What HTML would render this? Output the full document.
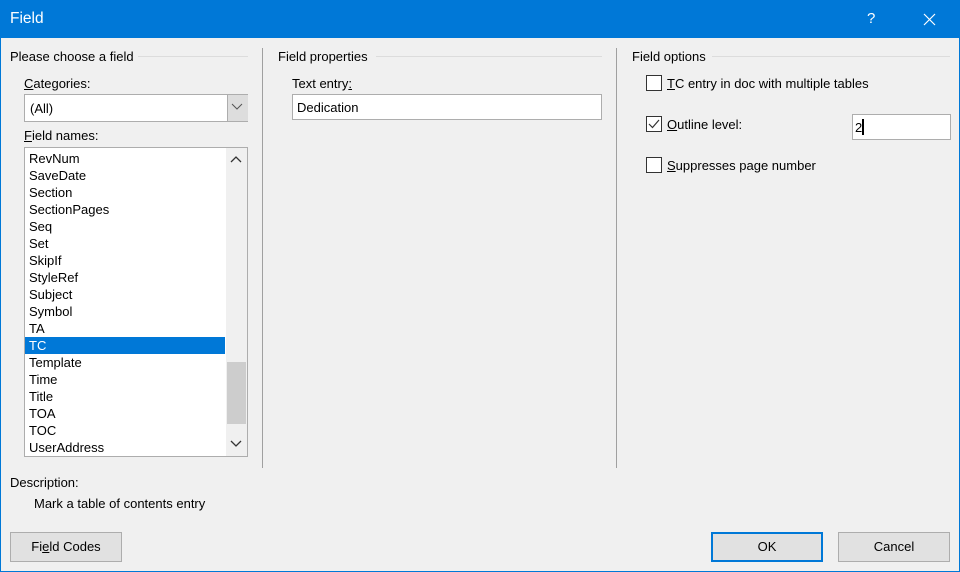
<!DOCTYPE html><html><head><style>
*{margin:0;padding:0;box-sizing:border-box}
body{width:960px;height:572px;background:#f0f0f0;font-family:"Liberation Sans",sans-serif;font-size:13px;color:#000;position:relative;overflow:hidden}
.a{position:absolute;white-space:nowrap}
.tb{position:absolute;left:0;top:0;width:960px;height:38px;background:#0078d7;color:#fff}
.line{position:absolute;height:1px;background:#dcdcdc}
.vs{position:absolute;width:1px;background:#a0a0a0;top:48px;height:420px}
.box{position:absolute;background:#fff;border:1px solid #adadad}
.cb{position:absolute;width:16px;height:16px;border:1px solid #333;background:#fff}
.btn{position:absolute;height:30px;background:#e1e1e1;border:1px solid #adadad;text-align:center;line-height:28px}
u{text-decoration:underline}
.it{position:absolute;left:4px;height:17px;line-height:17px}
</style></head><body>
<div class="a" style="left:0;top:0;width:1px;height:572px;background:#0078d7"></div>
<div class="a" style="left:959px;top:0;width:1px;height:572px;background:#0078d7"></div>
<div class="a" style="left:0;top:571px;width:960px;height:1px;background:#0078d7"></div>
<div class="tb"><span class="a" style="left:10px;top:10px;font-size:15.5px">Field</span>
<span class="a" style="left:867px;top:10px;font-size:15px">?</span>
<svg class="a" style="left:923px;top:13px" width="13" height="13"><path d="M1 1L12 12M12 1L1 12" stroke="#fff" stroke-width="1.2"/></svg></div>

<span class="a" style="left:10px;top:49px">Please choose a field</span>
<div class="line" style="left:138px;top:56px;width:110px"></div>
<span class="a" style="left:24px;top:76px"><u>C</u>ategories:</span>
<div class="box" style="left:24px;top:94px;width:224px;height:28px"><span class="a" style="left:5px;top:6px">(All)</span>
<div class="a" style="left:202px;top:0;width:21px;height:26px;background:#ddd;border-left:1px solid #adadad"></div>
<svg class="a" style="left:206px;top:8px" width="12" height="8"><path d="M1 1L6 6L11 1" stroke="#555" fill="none"/></svg></div>
<span class="a" style="left:24px;top:128px"><u>F</u>ield names:</span>
<div class="box" style="left:24px;top:147px;width:224px;height:310px;overflow:hidden">
<div style="position:absolute;left:0;top:2px;width:201px">
<div class="it" style="top:0">RevNum</div><div class="it" style="top:17px">SaveDate</div><div class="it" style="top:34px">Section</div><div class="it" style="top:51px">SectionPages</div><div class="it" style="top:68px">Seq</div><div class="it" style="top:85px">Set</div><div class="it" style="top:102px">SkipIf</div><div class="it" style="top:119px">StyleRef</div><div class="it" style="top:136px">Subject</div><div class="it" style="top:153px">Symbol</div><div class="it" style="top:170px">TA</div>
<div style="position:absolute;left:0;top:187px;width:200px;height:17px;background:#0078d7"></div>
<div class="it" style="top:187px;color:#fff">TC</div><div class="it" style="top:204px">Template</div><div class="it" style="top:221px">Time</div><div class="it" style="top:238px">Title</div><div class="it" style="top:255px">TOA</div><div class="it" style="top:272px">TOC</div><div class="it" style="top:289px">UserAddress</div></div>
<div class="a" style="left:201px;top:0;width:21px;height:308px;background:#f0f0f0"></div>
<div class="a" style="left:202px;top:214px;width:19px;height:62px;background:#cdcdcd"></div>
<svg class="a" style="left:205px;top:8px" width="12" height="8"><path d="M1 6L6 1L11 6" stroke="#333" stroke-width="1.3" fill="none"/></svg>
<svg class="a" style="left:205px;top:292px" width="12" height="8"><path d="M1 1L6 6L11 1" stroke="#333" stroke-width="1.3" fill="none"/></svg>
</div>

<div class="vs" style="left:262px"></div>
<span class="a" style="left:278px;top:49px">Field properties</span>
<div class="line" style="left:376px;top:56px;width:226px"></div>
<span class="a" style="left:292px;top:76px">Text entry<u>:</u></span>
<div class="box" style="left:292px;top:94px;width:310px;height:26px"><span class="a" style="left:4px;top:5px">Dedication</span></div>

<div class="vs" style="left:616px"></div>
<span class="a" style="left:632px;top:49px">Field options</span>
<div class="line" style="left:712px;top:56px;width:238px"></div>
<div class="cb" style="left:646px;top:75px"></div><span class="a" style="left:667px;top:76px"><u>T</u>C entry in doc with multiple tables</span>
<div class="cb" style="left:646px;top:116px"></div>
<svg class="a" style="left:648px;top:119px" width="12" height="10"><path d="M1 5L4.5 8.5L11 1" stroke="#333" stroke-width="1.2" fill="none"/></svg>
<span class="a" style="left:667px;top:117px"><u>O</u>utline level:</span>
<div class="box" style="left:852px;top:114px;width:99px;height:26px"><span class="a" style="left:2px;top:5px">2</span><div class="a" style="left:9px;top:4px;width:2px;height:16px;background:#000"></div></div>
<div class="cb" style="left:646px;top:157px"></div><span class="a" style="left:667px;top:158px"><u>S</u>uppresses page number</span>

<span class="a" style="left:10px;top:475px">Description:</span>
<span class="a" style="left:34px;top:496px">Mark a table of contents entry</span>

<div class="btn" style="left:10px;top:532px;width:112px">Fi<u>e</u>ld Codes</div>
<div class="btn" style="left:711px;top:532px;width:112px;border:2px solid #0078d7;line-height:26px">OK</div>
<div class="btn" style="left:838px;top:532px;width:112px">Cancel</div>
</body></html>
